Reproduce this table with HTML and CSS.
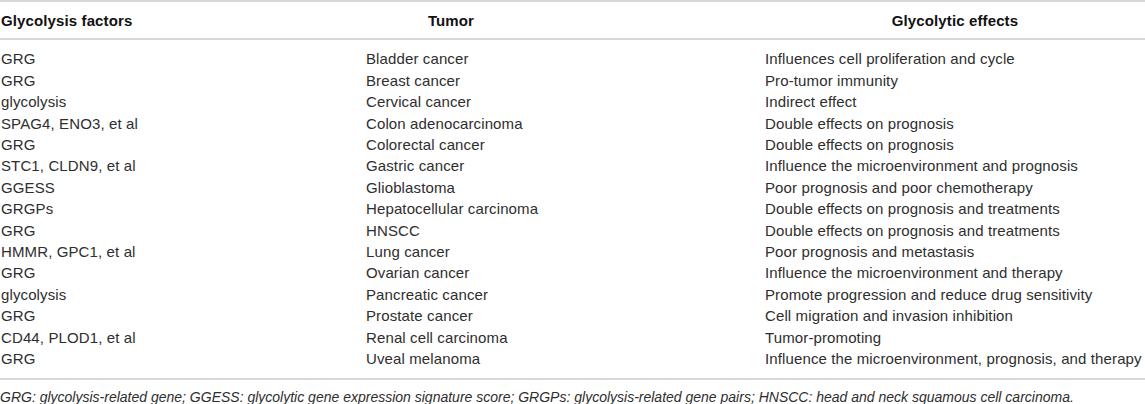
FILE: index.html
```html
<!DOCTYPE html>
<html>
<head>
<meta charset="utf-8">
<link rel="stylesheet" href="styles.css">
</head>
<body>
<table class="data">
  <colgroup><col class="c1"><col class="c2"><col class="c3"></colgroup>
  <thead>
    <tr><th class="h1">Glycolysis factors</th><th class="h2">Tumor</th><th class="h3">Glycolytic effects</th></tr>
  </thead>
  <tbody>
    <tr><td>GRG</td><td>Bladder cancer</td><td>Influences cell proliferation and cycle</td></tr>
    <tr><td>GRG</td><td>Breast cancer</td><td>Pro-tumor immunity</td></tr>
    <tr><td>glycolysis</td><td>Cervical cancer</td><td>Indirect effect</td></tr>
    <tr><td>SPAG4, ENO3, et al</td><td>Colon adenocarcinoma</td><td>Double effects on prognosis</td></tr>
    <tr><td>GRG</td><td>Colorectal cancer</td><td>Double effects on prognosis</td></tr>
    <tr><td>STC1, CLDN9, et al</td><td>Gastric cancer</td><td>Influence the microenvironment and prognosis</td></tr>
    <tr><td>GGESS</td><td>Glioblastoma</td><td>Poor prognosis and poor chemotherapy</td></tr>
    <tr><td>GRGPs</td><td>Hepatocellular carcinoma</td><td>Double effects on prognosis and treatments</td></tr>
    <tr><td>GRG</td><td>HNSCC</td><td>Double effects on prognosis and treatments</td></tr>
    <tr><td>HMMR, GPC1, et al</td><td>Lung cancer</td><td>Poor prognosis and metastasis</td></tr>
    <tr><td>GRG</td><td>Ovarian cancer</td><td>Influence the microenvironment and therapy</td></tr>
    <tr><td>glycolysis</td><td>Pancreatic cancer</td><td>Promote progression and reduce drug sensitivity</td></tr>
    <tr><td>GRG</td><td>Prostate cancer</td><td>Cell migration and invasion inhibition</td></tr>
    <tr><td>CD44, PLOD1, et al</td><td>Renal cell carcinoma</td><td>Tumor-promoting</td></tr>
    <tr><td>GRG</td><td>Uveal melanoma</td><td>Influence the microenvironment, prognosis, and therapy</td></tr>
  </tbody>
</table>
<p class="note">GRG: glycolysis-related gene; GGESS: glycolytic gene expression signature score; GRGPs: glycolysis-related gene pairs; HNSCC: head and neck squamous cell carcinoma.</p>
</body>
</html>
```

FILE: styles.css
```css
html, body {
  margin: 0;
  padding: 0;
  background: #ffffff;
}
body {
  font-family: "Liberation Sans", Arial, sans-serif;
  color: #2e2e2e;
  width: 1145px;
}
.data {
  width: 1145px;
  border-collapse: collapse;
  table-layout: fixed;
  font-size: 15px;
  line-height: 21.4px;
  letter-spacing: 0.12px;
  border-top: 2px solid #d8d8d8;
  border-bottom: 2px solid #d8d8d8;
}
.c1 { width: 366px; }
.c2 { width: 399px; }
.c3 { width: 380px; }
.data th {
  font-weight: bold;
  color: #111;
  padding: 8px 0 7px 0;
  border-bottom: 2px solid #d8d8d8;
  text-align: left;
  white-space: nowrap;
}
.data th.h1 { padding-left: 1px; }
.data th.h2 { text-align: center; padding-right: 229px; }
.data th.h3 { text-align: center; }
.data td {
  padding: 0;
  white-space: nowrap;
  vertical-align: top;
}
.data td:first-child { padding-left: 1px; }
.data tbody tr:first-child td { padding-top: 8px; }
.data tbody tr:last-child td { padding-bottom: 8px; }
.note {
  margin: 0;
  padding-top: 7px;
  font-size: 14px;
  line-height: 20px;
  font-style: italic;
  color: #2e2e2e;
  white-space: nowrap;
}
```
